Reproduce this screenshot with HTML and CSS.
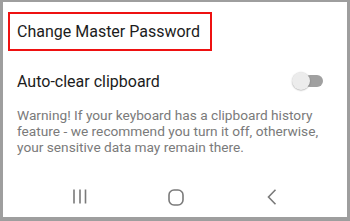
FILE: index.html
```html
<!DOCTYPE html>
<html>
<head>
<meta charset="utf-8">
<link rel="stylesheet" href="styles.css">
</head>
<body>
<div class="screen">
  <div class="title-box">Change Master Password</div>
  <div class="setting-row">
    <span class="setting-label">Auto-clear clipboard</span>
    <span class="toggle"><span class="track"></span><span class="knob"></span></span>
  </div>
  <p class="warning">Warning! If your keyboard has a clipboard history feature - we recommend you turn it off, otherwise, your sensitive data may remain there.</p>
  <div class="navbar">
    <div class="nav-cell">
      <svg width="14" height="15" viewBox="0 0 14 15">
        <rect x="0.2" y="0.5" width="1.6" height="14" fill="#7a7a7a"/>
        <rect x="6.2" y="0.5" width="1.6" height="14" fill="#7a7a7a"/>
        <rect x="11.7" y="0.5" width="1.6" height="14" fill="#7a7a7a"/>
      </svg>
    </div>
    <div class="nav-cell">
      <svg width="16" height="17" viewBox="0 0 16 17">
        <rect x="1" y="1" width="14" height="15" rx="5" ry="5" fill="none" stroke="#7a7a7a" stroke-width="1.6"/>
      </svg>
    </div>
    <div class="nav-cell">
      <svg width="10" height="16" viewBox="0 0 10 16">
        <polyline points="8.5,0.8 1.5,8 8.5,15.2" fill="none" stroke="#7a7a7a" stroke-width="1.6"/>
      </svg>
    </div>
  </div>
</div>
</body>
</html>
```
FILE: styles.css
```css
html, body {
  margin: 0;
  padding: 0;
  background: #ffffff;
}
.screen {
  box-sizing: border-box;
  width: 350px;
  height: 221px;
  border-style: solid;
  border-color: #9e9e9e;
  border-width: 2px 3px 4px 3px;
  background: #ffffff;
  display: flex;
  flex-direction: column;
  font-family: Roboto, "Noto Sans", sans-serif;
}
.title-box {
  box-sizing: border-box;
  margin: 10px 0 0 5px;
  width: 204px;
  height: 39px;
  border: 2px solid #ee1111;
  padding-left: 7px;
  display: flex;
  align-items: center;
  font-size: 16px;
  color: #1c1c1c;
}
.setting-row {
  display: flex;
  align-items: center;
  justify-content: space-between;
  margin: 20px 24px 0 14px;
  height: 20px;
}
.setting-label {
  font-size: 16px;
  color: #1c1c1c;
}
.toggle {
  position: relative;
  width: 31px;
  height: 18px;
  display: inline-block;
}
.track {
  position: absolute;
  left: 12px;
  top: 3px;
  width: 19px;
  height: 12px;
  border-radius: 6px;
  background: #a0a0a0;
}
.knob {
  position: absolute;
  left: 0;
  top: 0;
  width: 18px;
  height: 18px;
  border-radius: 50%;
  background: #ececec;
  box-shadow: 0 0.5px 1.5px rgba(0,0,0,0.35);
}
.warning {
  margin: 16px 16px 0 14px;
  font-size: 13.7px;
  line-height: 16px;
  color: #7a7a7a;
}
.navbar {
  margin-top: auto;
  height: 28px;
  display: flex;
  align-items: flex-start;
  padding-left: 29px;
}
.nav-cell {
  width: 96px;
  display: flex;
  justify-content: center;
}
.nav-cell svg {
  display: block;
}
```
